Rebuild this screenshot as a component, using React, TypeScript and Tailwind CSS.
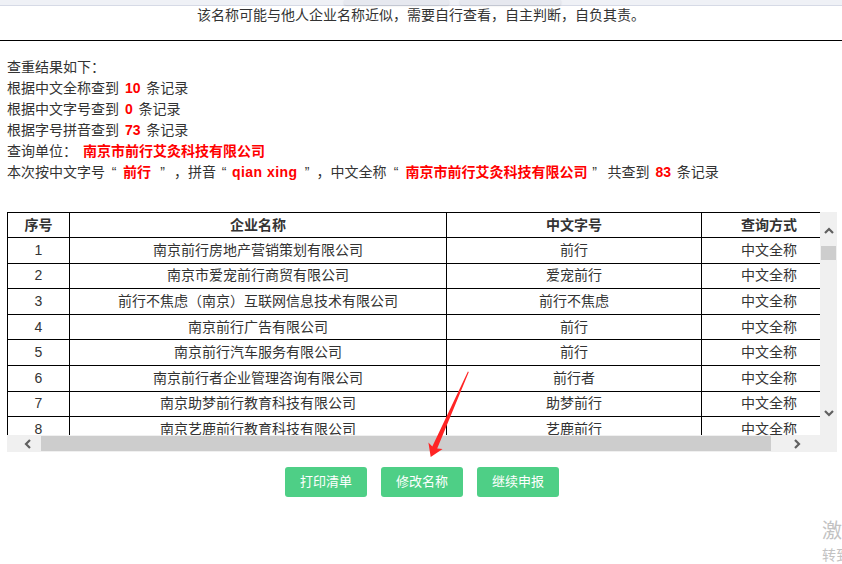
import React from "react";

const rows = [
  ["1", "南京前行房地产营销策划有限公司", "前行", "中文全称"],
  ["2", "南京市爱宠前行商贸有限公司", "爱宠前行", "中文全称"],
  ["3", "前行不焦虑（南京）互联网信息技术有限公司", "前行不焦虑", "中文全称"],
  ["4", "南京前行广告有限公司", "前行", "中文全称"],
  ["5", "南京前行汽车服务有限公司", "前行", "中文全称"],
  ["6", "南京前行者企业管理咨询有限公司", "前行者", "中文全称"],
  ["7", "南京助梦前行教育科技有限公司", "助梦前行", "中文全称"],
  ["8", "南京艺鹿前行教育科技有限公司", "艺鹿前行", "中文全称"],
];

function Red({ children, tight }: { children: React.ReactNode; tight?: boolean }) {
  return <b className={`font-bold text-[#ff0000] ${tight ? "" : "mx-[2px]"}`}>{children}</b>;
}

// quote mark sitting in its own slot, as the original page spaces them out
function Q({ mark, w }: { mark: string; w: string }) {
  return <span className={`inline-block text-center ${w}`}>{mark}</span>;
}

function Chevron({ dir }: { dir: "up" | "down" | "left" | "right" }) {
  const points = {
    up: "1,7 5,3 9,7",
    down: "1,3 5,7 9,3",
    left: "7,1 3,5 7,9",
    right: "3,1 7,5 3,9",
  }[dir];
  return (
    <svg width="10" height="10" viewBox="0 0 10 10">
      <polyline points={points} fill="none" stroke="#606060" strokeWidth="2.2" />
    </svg>
  );
}

export default function App() {
  return (
    <div className="relative h-[564px] w-[842px] overflow-hidden bg-white font-['Liberation_Sans','Noto_Sans_CJK_SC',sans-serif] text-[14px] text-[#333]">
      {/* browser strip */}
      <div className="flex h-[6px] border-b border-[#d6dae6] bg-[#eff1f6]">
        <div className="ml-[344px] w-[105px] rounded-b-[2px] bg-[#e6e8ef] shadow-[0_1px_2px_rgba(0,0,0,0.12)]" />
        <div className="ml-[11px] w-[101px] rounded-b-[2px] bg-[#e6e8ef] shadow-[0_1px_2px_rgba(0,0,0,0.12)]" />
      </div>

      <div className="h-[35px] border-b border-black text-center leading-[18px]">
        该名称可能与他人企业名称近似，需要自行查看，自主判断，自负其责。
      </div>

      <div className="mt-[16px] px-[7px] leading-[21px]">
        <p>查重结果如下：</p>
        <p>
          根据中文全称查到 <Red>10</Red> 条记录
        </p>
        <p>
          根据中文字号查到 <Red>0</Red> 条记录
        </p>
        <p>
          根据字号拼音查到 <Red>73</Red> 条记录
        </p>
        <p>
          查询单位： <Red>南京市前行艾灸科技有限公司</Red>
        </p>
        <p className="whitespace-nowrap">
          本次按中文字号
          <Q mark="“" w="w-[18px]" />
          <Red tight>前行</Red>
          <Q mark="”" w="w-[23px]" />
          ，拼音
          <Q mark="“" w="w-[16px]" />
          <b className="font-bold tracking-[0.45px] text-[#ff0000]">qian xing</b>
          <Q mark="”" w="w-[19px]" />
          ，中文全称
          <Q mark="“" w="w-[19px]" />
          <Red tight>南京市前行艾灸科技有限公司</Red>
          <Q mark="”" w="w-[14px]" />
          <span className="ml-[6px]">共查到</span> <Red>83</Red> 条记录
        </p>
      </div>

      <div className="ml-[7px] mt-[29px] w-[830px]">
        <div className="flex h-[223px]">
          <div className="w-[813px] overflow-hidden">
            <table className="w-[830px] table-fixed border-separate border-spacing-0 text-center">
              <colgroup>
                <col className="w-[63px]" />
                <col className="w-[377px]" />
                <col className="w-[255px]" />
                <col className="w-[135px]" />
              </colgroup>
              <thead>
                <tr>
                  {["序号", "企业名称", "中文字号", "查询方式"].map((h, i) => (
                    <th
                      key={h}
                      className={`h-[26px] border-t border-r border-b border-black p-0 font-bold ${
                        i === 0 ? "border-l" : ""
                      }`}
                    >
                      {h}
                    </th>
                  ))}
                </tr>
              </thead>
              <tbody>
                {rows.map((row) => (
                  <tr key={row[0]}>
                    {row.map((cell, i) => (
                      <td
                        key={i}
                        className={`h-[25.6px] border-r border-b border-black p-0 ${
                          i === 0 ? "border-l" : ""
                        }`}
                      >
                        {cell}
                      </td>
                    ))}
                  </tr>
                ))}
              </tbody>
            </table>
          </div>
          <div className="flex w-[17px] flex-col items-center bg-[#f0f0f0]">
            <div className="h-[34px] pt-[14px]">
              <Chevron dir="up" />
            </div>
            <div className="h-[14px] w-[15px] bg-[#cdcdcd]" />
            <div className="flex-1" />
            <div className="h-[34px] pt-[7px]">
              <Chevron dir="down" />
            </div>
          </div>
        </div>
        <div className="flex h-[17px] items-center bg-[#f0f0f0]">
          <div className="flex w-[34px] justify-center pl-[8px]">
            <Chevron dir="left" />
          </div>
          <div className="h-[15px] w-[730px] bg-[#cdcdcd]" />
          <div className="flex-1" />
          <div className="flex w-[34px] justify-center pr-[12px]">
            <Chevron dir="right" />
          </div>
          <div className="w-[17px]" />
        </div>
      </div>

      <div className="mt-[15px] flex justify-center gap-[14px] pl-[2px]">
        {["打印清单", "修改名称", "继续申报"].map((label) => (
          <button
            key={label}
            type="button"
            className="h-[30px] w-[82px] rounded-[3px] bg-[#4ecf86] text-[13px] text-white"
          >
            {label}
          </button>
        ))}
      </div>

      {/* annotation arrow */}
      <svg
        className="pointer-events-none absolute left-0 top-0"
        width="842"
        height="564"
        viewBox="0 0 842 564"
      >
        <polygon
          points="468.8,371.9 437.2,448.6 442.6,448.9 430.7,456.9 428.4,442.6 432.3,446.4 467.9,371.5"
          fill="#ff2424"
        />
      </svg>

      {/* windows watermark, cut by the window edge as in the capture */}
      <div className="pointer-events-none absolute left-[822px] top-[518px] whitespace-nowrap text-[#c2c2c2]">
        <div className="text-[20px] leading-[26px]">激活 Windows</div>
        <div className="mt-[2px] text-[14px] leading-[18px]">转到“设置”以激活 Windows。</div>
      </div>
    </div>
  );
}
